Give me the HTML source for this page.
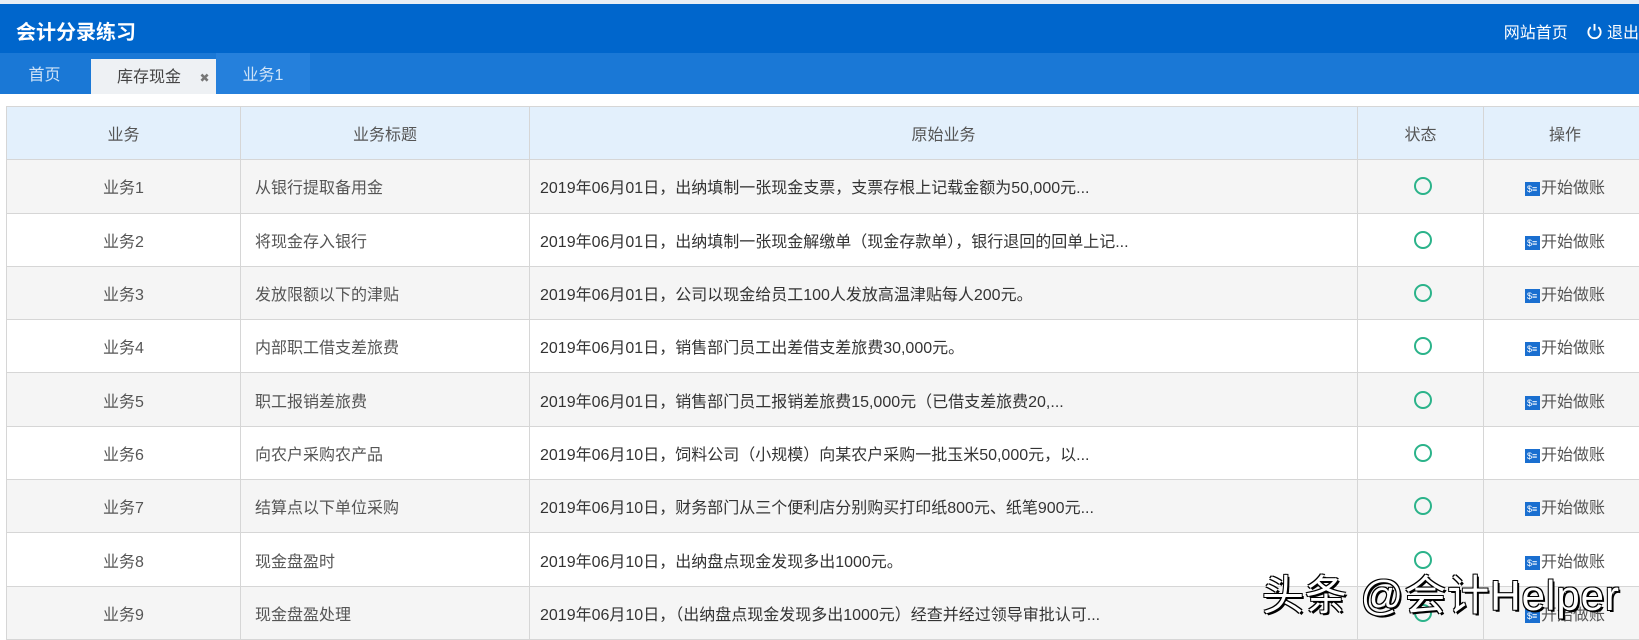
<!DOCTYPE html>
<html><head><meta charset="utf-8"><style>
*{margin:0;padding:0;box-sizing:border-box}
body{width:1639px;height:628px;overflow:hidden;background:#fff;font-family:"Liberation Sans","Noto Sans CJK SC",sans-serif;position:relative}
.top{position:absolute;left:0;top:0;width:1639px;height:4px;background:#e8eef5}
.hdr{position:absolute;left:0;top:4px;width:1639px;height:49px;background:#0066cc;color:#fff}
.hdr .t{position:absolute;left:16px;top:12px;font-size:20px;font-weight:bold}
.hdr .r{position:absolute;right:0;top:15px;font-size:16px}
.tabs{position:absolute;left:0;top:53px;width:1639px;height:41px;background:#1a78d6}
.tab{position:absolute;top:0;height:41px;line-height:46px;font-size:16px;text-align:center;color:#cfe3f7}
table{position:absolute;left:6px;top:106px;border-collapse:collapse;width:1640px;table-layout:fixed}
td,th{border:1px solid #d6d6d6;height:53.3px;font-size:16px;font-weight:normal;color:#555}
th{background:#e3f0fc;color:#555}
tr:nth-child(even) td{background:#f5f5f5}
td.c{text-align:center}
td.l{padding-left:14px}
td.d{padding-left:10px;color:#333}
.o{display:inline-block;width:18px;height:18px;border:2.5px solid #2bb38a;border-radius:50%;vertical-align:-5px;margin-left:4px}
.ic{display:inline-block;width:15px;height:14px;background:#1a6fd0;color:#fff;font-size:9px;line-height:14px;vertical-align:1px;margin-right:1px;text-align:left;padding-left:2px}
.wm{position:absolute;left:1262px;top:562px;font-size:42px;color:#fff;text-shadow:2px 2px 0 #000,-1px -1px 0 #000,1px -1px 0 #000,-1px 1px 0 #000;letter-spacing:1px}
</style></head><body>
<div class="top"></div>
<div class="hdr"><div class="t">会计分录练习</div>
<div class="r">网站首页&nbsp;&nbsp;&nbsp;&nbsp;<svg width="17" height="17" viewBox="0 0 18 18" style="vertical-align:-2px"><path d="M5 4.5A6.5 6.5 0 1 0 13 4.5" fill="none" stroke="#fff" stroke-width="2"/><path d="M9 1v7" stroke="#fff" stroke-width="2"/></svg> 退出</div></div>
<div class="tabs">
<div class="tab" style="left:0;width:89px">首页</div>
<div class="tab" style="left:91px;width:125px;background:#eef1f4;color:#444;top:6px;height:35px;line-height:38px;text-align:left;padding-left:26px">库存现金 <span style="font-size:12px;color:#777;margin-left:14px">✖</span></div>
<div class="tab" style="left:216px;width:94px;background:#2580dc">业务1</div>
</div>
<table>
<colgroup><col style="width:234px"><col style="width:289px"><col style="width:828px"><col style="width:126px"><col style="width:163px"></colgroup>
<tr><th>业务</th><th>业务标题</th><th>原始业务</th><th>状态</th><th>操作</th></tr>
<tr><td class="c">业务1</td><td class="l">从银行提取备用金</td><td class="d">2019年06月01日，出纳填制一张现金支票，支票存根上记载金额为50,000元...</td><td class="c"><span class="o"></span></td><td class="c"><span class="ic">$≡</span>开始做账</td></tr>
<tr><td class="c">业务2</td><td class="l">将现金存入银行</td><td class="d">2019年06月01日，出纳填制一张现金解缴单（现金存款单），银行退回的回单上记...</td><td class="c"><span class="o"></span></td><td class="c"><span class="ic">$≡</span>开始做账</td></tr>
<tr><td class="c">业务3</td><td class="l">发放限额以下的津贴</td><td class="d">2019年06月01日，公司以现金给员工100人发放高温津贴每人200元。</td><td class="c"><span class="o"></span></td><td class="c"><span class="ic">$≡</span>开始做账</td></tr>
<tr><td class="c">业务4</td><td class="l">内部职工借支差旅费</td><td class="d">2019年06月01日，销售部门员工出差借支差旅费30,000元。</td><td class="c"><span class="o"></span></td><td class="c"><span class="ic">$≡</span>开始做账</td></tr>
<tr><td class="c">业务5</td><td class="l">职工报销差旅费</td><td class="d">2019年06月01日，销售部门员工报销差旅费15,000元（已借支差旅费20,...</td><td class="c"><span class="o"></span></td><td class="c"><span class="ic">$≡</span>开始做账</td></tr>
<tr><td class="c">业务6</td><td class="l">向农户采购农产品</td><td class="d">2019年06月10日，饲料公司（小规模）向某农户采购一批玉米50,000元，以...</td><td class="c"><span class="o"></span></td><td class="c"><span class="ic">$≡</span>开始做账</td></tr>
<tr><td class="c">业务7</td><td class="l">结算点以下单位采购</td><td class="d">2019年06月10日，财务部门从三个便利店分别购买打印纸800元、纸笔900元...</td><td class="c"><span class="o"></span></td><td class="c"><span class="ic">$≡</span>开始做账</td></tr>
<tr><td class="c">业务8</td><td class="l">现金盘盈时</td><td class="d">2019年06月10日，出纳盘点现金发现多出1000元。</td><td class="c"><span class="o"></span></td><td class="c"><span class="ic">$≡</span>开始做账</td></tr>
<tr><td class="c">业务9</td><td class="l">现金盘盈处理</td><td class="d">2019年06月10日，（出纳盘点现金发现多出1000元）经查并经过领导审批认可...</td><td class="c"><span class="o"></span></td><td class="c"><span class="ic">$≡</span>开始做账</td></tr>
</table>
<div class="wm">头条 @会计Helper</div>
</body></html>
